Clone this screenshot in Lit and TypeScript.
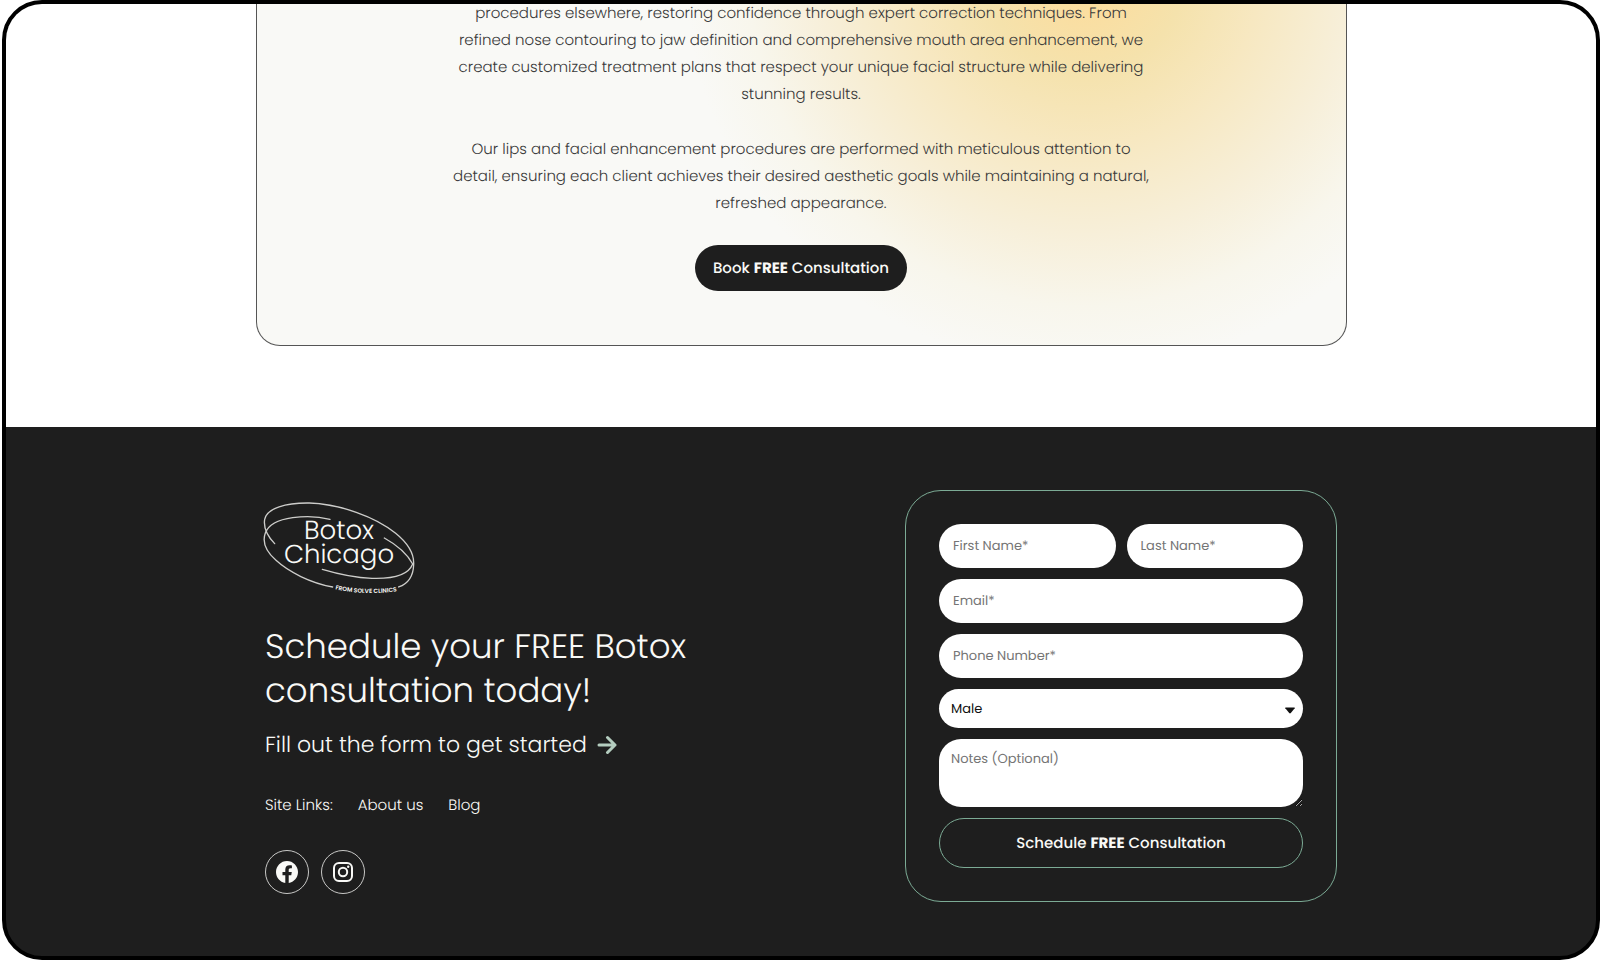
import { LitElement, html, css } from "lit";
import { customElement } from "lit/decorators.js";

@customElement("brand-logo")
export class BrandLogo extends LitElement {
  static styles = css`
    :host {
      display: block;
      line-height: 0;
      text-rendering: geometricPrecision;
    }
    .ring {
      fill: none;
      stroke: #f9f9f6;
      stroke-width: 4;
      stroke-linecap: round;
      opacity: 0.8;
    }
    .name {
      font-family: Poppins, Inter, sans-serif;
      font-size: 26px;
      font-weight: 300;
      fill: #f9f9f6;
    }
    .tag {
      font-family: Poppins, Inter, sans-serif;
      font-size: 6px;
      font-weight: 600;
      fill: #f9f9f6;
    }
  `;

  render() {
    return html`
      <svg width="153" height="97" viewBox="3 0 153 97" overflow="visible" role="img" aria-label="Botox Chicago">
        <g class="ring" transform="scale(0.3333) translate(-36 -60)">
          <path d="M74 191C52 168 40 143 44 118C51 84 108 68 178 69C268 72 377 110 437 160C474 190 493 221 491 254C490 286 474 311 446 321" />
          <path d="M240 118C205 109 165 108 128 113C85 119 55 135 46 159C36 186 48 214 78 241C116 276 182 309 248 321" />
          <path d="M403 174C443 196 474 226 488 252C476 284 433 297 366 295C315 293 264 282 217 268" />
        </g>
        <path id="tagline" d="M72 89Q104 96 136 91" fill="none" />
        <text class="name" x="77" y="39" text-anchor="middle">Botox</text>
        <text class="name" x="77" y="63" text-anchor="middle">Chicago</text>
        <text class="tag" text-anchor="middle">
          <textPath href="#tagline" startOffset="50%">FROM SOLVE CLINICS</textPath>
        </text>
      </svg>
    `;
  }
}

@customElement("consultation-form")
export class ConsultationForm extends LitElement {
  static styles = css`
    :host {
      display: block;
    }
    * {
      box-sizing: border-box;
    }
    .form {
      display: grid;
      grid-template-columns: 1fr 1fr;
      gap: 11px;
      padding: 33px;
      border: 1px solid #7cab95;
      border-radius: 36px;
    }
    .field,
    .submit {
      width: 100%;
      margin: 0;
      font-family: Poppins, Inter, sans-serif;
      font-size: 13px;
      border-radius: 22px;
      text-rendering: geometricPrecision;
    }
    .field {
      height: 44px;
      padding: 0 14px;
      border: 0;
      background: #fff;
      color: #111;
    }
    .field::placeholder {
      color: #757575;
      opacity: 1;
    }
    .wide {
      grid-column: 1 / -1;
    }
    .picker {
      position: relative;
    }
    .select {
      display: block;
      height: 39px;
      padding: 0 12px;
      appearance: none;
    }
    .caret {
      position: absolute;
      right: 8px;
      top: 18px;
      pointer-events: none;
    }
    .notes {
      display: block;
      height: 68px;
      padding: 10px 12px;
      line-height: 20px;
    }
    .submit {
      height: 50px;
      border: 1px solid #7cab95;
      border-radius: 25px;
      background: transparent;
      color: #f9f9f6;
      font-size: 15px;
      font-weight: 500;
      cursor: pointer;
    }
  `;

  render() {
    return html`
      <form class="form" @submit=${(e: Event) => e.preventDefault()}>
        <input class="field" type="text" name="first" placeholder="First Name*" aria-label="First Name" required />
        <input class="field" type="text" name="last" placeholder="Last Name*" aria-label="Last Name" required />
        <input class="field wide" type="email" name="email" placeholder="Email*" aria-label="Email" required />
        <input class="field wide" type="tel" name="phone" placeholder="Phone Number*" aria-label="Phone Number" required />
        <div class="picker wide">
          <select class="field select" name="gender" aria-label="Gender">
            <option>Male</option>
            <option>Female</option>
          </select>
          <svg class="caret" width="10" height="7" viewBox="0 0 10 7" aria-hidden="true">
            <path d="M0.6 0.4h8.8q0.6 0 0.3 0.8L5.8 6q-0.8 0.8-1.6 0L0.3 1.2Q0 0.4 0.6 0.4z" fill="#111" />
          </svg>
        </div>
        <textarea class="field notes wide" name="notes" placeholder="Notes (Optional)" aria-label="Notes"></textarea>
        <button class="submit wide" type="submit">Schedule <b>FREE</b> Consultation</button>
      </form>
    `;
  }
}

@customElement("app-root")
export class AppRoot extends LitElement {
  static styles = css`
    :host {
      display: block;
      font-family: Poppins, Inter, sans-serif;
      text-rendering: geometricPrecision;
      background: #fff;
    }
    * {
      box-sizing: border-box;
    }
    .frame {
      display: flex;
      flex-direction: column;
      min-height: 100vh;
      margin-left: 2px;
      border: 4px solid #000;
      border-radius: 40px;
      overflow: hidden;
      background: #1e1e1e;
    }
    .main {
      display: flow-root;
      background: #fff;
    }
    .card {
      display: flex;
      flex-direction: column;
      align-items: center;
      width: 100%;
      max-width: 1091px;
      margin: -4px auto 81px;
      padding: 0 40px 54px;
      border: 1px solid #555;
      border-top: 0;
      border-radius: 0 0 24px 24px;
      background: radial-gradient(circle 400px at 76% -30px, #fbd795 0%, #fadea1 11%, #f5e2ac 25%, #f7e8c1 44%, #f7efd9 66%, #f8f6ec 84%, #f9f9f6 100%) #f9f9f6;
    }
    .copy {
      max-width: 720px;
      margin: 0 0 28px;
      color: #3a3a3a;
      font-size: 15px;
      font-weight: 300;
      line-height: 27px;
      text-align: center;
    }
    .book {
      height: 46px;
      padding: 0 18px;
      border: 0;
      border-radius: 23px;
      background: #1e1e1e;
      color: #f9f9f6;
      font: 500 15px Poppins, Inter, sans-serif;
      text-rendering: geometricPrecision;
      cursor: pointer;
    }
    .footer {
      flex: 1;
      padding: 63px 24px 54px;
      color: #f9f9f6;
    }
    .inner {
      display: flex;
      flex-wrap: wrap;
      justify-content: space-between;
      gap: 32px;
      max-width: 1072px;
      margin: 0 auto;
    }
    .intro {
      padding-top: 10px;
    }
    .title {
      margin: 27px 0 16px;
      font-size: 34px;
      font-weight: 300;
      line-height: 44px;
    }
    .lead {
      display: flex;
      align-items: center;
      gap: 10px;
      margin: 0 0 32px;
      font-size: 22px;
      font-weight: 300;
      line-height: 34px;
    }
    .links {
      display: flex;
      gap: 25px;
      font-size: 15px;
      font-weight: 300;
      line-height: 24px;
    }
    .link {
      color: inherit;
      text-decoration: none;
    }
    .social {
      display: flex;
      gap: 12px;
      margin-top: 32px;
    }
    .round {
      display: grid;
      place-items: center;
      width: 44px;
      height: 44px;
      border: 1px solid #c8c8c6;
      border-radius: 50%;
      color: #f9f9f6;
    }
    .form {
      width: 432px;
    }
  `;

  render() {
    return html`
      <div class="frame">
        <main class="main">
          <section class="card">
            <p class="copy">
              procedures elsewhere, restoring confidence through expert correction techniques. From<br />
              refined nose contouring to jaw definition and comprehensive mouth area enhancement, we<br />
              create customized treatment plans that respect your unique facial structure while delivering<br />
              stunning results.
            </p>
            <p class="copy">
              Our lips and facial enhancement procedures are performed with meticulous attention to<br />
              detail, ensuring each client achieves their desired aesthetic goals while maintaining a natural,<br />
              refreshed appearance.
            </p>
            <button class="book" type="button">Book <b>FREE</b> Consultation</button>
          </section>
        </main>
        <footer class="footer">
          <div class="inner">
            <div class="intro">
              <brand-logo></brand-logo>
              <h2 class="title">Schedule your FREE Botox<br />consultation today!</h2>
              <p class="lead">
                Fill out the form to get started
                <svg width="20" height="20" viewBox="0 0 20 20" fill="none" stroke="#b4cdbf" stroke-width="3" stroke-linecap="round" stroke-linejoin="round" aria-hidden="true">
                  <path d="M2 10h16M10.5 2.5L18 10l-7.5 7.5" />
                </svg>
              </p>
              <nav class="links">
                <span>Site Links:</span>
                <a class="link" href="#about">About us</a>
                <a class="link" href="#blog">Blog</a>
              </nav>
              <div class="social">
                <a class="round" href="#facebook" aria-label="Facebook">
                  <svg width="22" height="22" viewBox="0 0 24 24" fill="currentColor" aria-hidden="true">
                    <path d="M24 12.07C24 5.4 18.63 0 12 0S0 5.4 0 12.07C0 18.1 4.39 23.1 10.13 24v-8.44H7.08v-3.49h3.05V9.41c0-3.02 1.79-4.69 4.53-4.69 1.31 0 2.68.24 2.68.24v2.97h-1.51c-1.49 0-1.96.93-1.96 1.88v2.26h3.33l-.53 3.49h-2.8V24C19.61 23.1 24 18.1 24 12.07z" />
                  </svg>
                </a>
                <a class="round" href="#instagram" aria-label="Instagram">
                  <svg width="20" height="20" viewBox="0 0 20 20" fill="none" stroke="currentColor" stroke-width="2" aria-hidden="true">
                    <rect x="1" y="1" width="18" height="18" rx="5" />
                    <circle cx="10" cy="10" r="4.2" />
                    <circle cx="15.2" cy="4.8" r="1.2" fill="currentColor" stroke="none" />
                  </svg>
                </a>
              </div>
            </div>
            <consultation-form class="form"></consultation-form>
          </div>
        </footer>
      </div>
    `;
  }
}
